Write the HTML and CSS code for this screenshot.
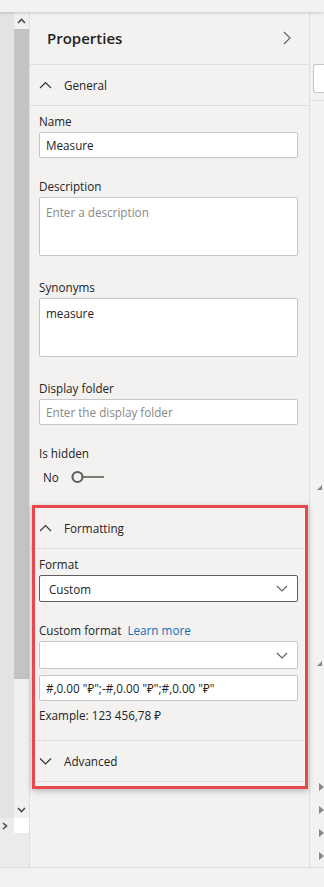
FILE: index.html
```html
<!DOCTYPE html>
<html lang="en">

<head>
    <meta charset="UTF-8">
    <meta name="viewport" content="width=device-width, initial-scale=1.0">
    <title>Properties</title>
    <link rel="stylesheet" href="styles.css">
</head>

<body>
    <div class="topbar"></div>

    <div class="main">
        <!-- left rail + scrollbar -->
        <div class="left">
            <div class="left-top">
                <div class="rail"></div>
                <div class="scrollbar">
                    <div class="sb-btn">
                        <svg width="9" height="6" viewBox="0 0 9 6"><polyline points="1,5 4.5,1.5 8,5" fill="none" stroke="#4a4a4a" stroke-width="1.6"/></svg>
                    </div>
                    <div class="sb-thumb"></div>
                    <div class="sb-track"></div>
                    <div class="sb-btn">
                        <svg width="9" height="6" viewBox="0 0 9 6"><polyline points="1,1 4.5,4.5 8,1" fill="none" stroke="#4a4a4a" stroke-width="1.6"/></svg>
                    </div>
                </div>
            </div>
            <div class="left-corner">
                <div class="corner-arrow">
                    <svg width="6" height="8" viewBox="0 0 6 8"><polyline points="1,1 4.5,4 1,7" fill="none" stroke="#4a4a4a" stroke-width="1.6"/></svg>
                </div>
                <div class="corner-box"></div>
            </div>
            <div class="left-fill"></div>
        </div>

        <!-- properties pane -->
        <div class="panel">
            <div class="panel-header">
                <h1 class="panel-title">Properties</h1>
                <svg class="panel-close" width="8" height="14" viewBox="0 0 8 14"><polyline points="1,1 7,7 1,13" fill="none" stroke="#605e5c" stroke-width="1.1"/></svg>
            </div>

            <div class="section">
                <div class="section-head">
                    <svg class="chev" width="13" height="8" viewBox="0 0 13 8"><polyline points="1,7 6.5,1.5 12,7" fill="none" stroke="#323130" stroke-width="1.1"/></svg>
                    <span>General</span>
                </div>
                <div class="section-body">
                    <div class="field">
                        <div class="label">Name</div>
                        <div class="input">Measure</div>
                    </div>
                    <div class="field field-tall">
                        <div class="label">Description</div>
                        <div class="input textarea placeholder">Enter a description</div>
                    </div>
                    <div class="field field-tall">
                        <div class="label">Synonyms</div>
                        <div class="input textarea">measure</div>
                    </div>
                    <div class="field">
                        <div class="label">Display folder</div>
                        <div class="input placeholder">Enter the display folder</div>
                    </div>
                    <div class="field">
                        <div class="label">Is hidden</div>
                        <div class="toggle-row">
                            <span class="toggle-text">No</span>
                            <svg width="34" height="14" viewBox="0 0 34 14"><circle cx="6.5" cy="7" r="5" fill="none" stroke="#605e5c" stroke-width="2.2"/><line x1="11.5" y1="7" x2="33" y2="7" stroke="#605e5c" stroke-width="1.6"/></svg>
                        </div>
                    </div>
                </div>
            </div>

            <div class="section">
                <div class="section-head">
                    <svg class="chev" width="13" height="8" viewBox="0 0 13 8"><polyline points="1,7 6.5,1.5 12,7" fill="none" stroke="#323130" stroke-width="1.1"/></svg>
                    <span>Formatting</span>
                </div>
                <div class="section-body">
                    <div class="field">
                        <div class="label">Format</div>
                        <div class="input select">
                            <span class="select-value">Custom</span>
                            <svg width="12" height="7" viewBox="0 0 12 7"><polyline points="1,1 6,6 11,1" fill="none" stroke="#605e5c" stroke-width="1.1"/></svg>
                        </div>
                    </div>
                    <div class="field field-close">
                        <div class="label">Custom format <a class="link" href="#">Learn more</a></div>
                        <div class="input combo">
                            <span></span>
                            <svg width="12" height="7" viewBox="0 0 12 7"><polyline points="1,1 6,6 11,1" fill="none" stroke="#605e5c" stroke-width="1.1"/></svg>
                        </div>
                        <div class="input">#,0.00 "₽";-#,0.00 "₽";#,0.00 "₽"</div>
                        <div class="example">Example: 123 456,78 ₽</div>
                    </div>
                </div>
            </div>

            <div class="section">
                <div class="section-head">
                    <svg class="chev" width="13" height="8" viewBox="0 0 13 8"><polyline points="1,1.5 6.5,7 12,1.5" fill="none" stroke="#323130" stroke-width="1.1"/></svg>
                    <span>Advanced</span>
                </div>
            </div>

            <!-- annotation frame -->
            <div class="highlight"></div>
        </div>

        <!-- edge of the next pane -->
        <div class="side">
            <div class="side-box"></div>
            <div class="side-line"></div>
            <div class="grip grip-1"></div>
            <div class="grip grip-2"></div>
            <div class="side-arrows">
                <span class="tri"></span>
                <span class="tri"></span>
                <span class="tri"></span>
                <span class="tri"></span>
            </div>
        </div>
    </div>

    <div class="bottombar"></div>
</body>

</html>
```

FILE: styles.css
```css
* {
    box-sizing: border-box;
}

body {
    margin: 0;
    width: 324px;
    height: 887px;
    overflow: hidden;
    font-family: "Open Sans", "Noto Sans", sans-serif;
    font-size: 11.7px;
    color: #252423;
    background-color: #f3f2f1;
}

.topbar {
    height: 12px;
    background-color: #f3f2f1;
    box-shadow: 0 1px 3px rgba(0, 0, 0, 0.18);
    position: relative;
    z-index: 2;
}

.main {
    display: flex;
    height: 856px;
    border-bottom: 1px solid #dedcda;
}

/* left rail and scrollbar */
.left {
    width: 29px;
    display: flex;
    flex-direction: column;
    background-color: #ebebeb;
}

.left-top {
    display: flex;
    height: 806px;
}

.rail {
    width: 14px;
    background-color: #e3e3e3;
}

.scrollbar {
    width: 15px;
    display: flex;
    flex-direction: column;
}

.sb-btn {
    height: 17px;
    background-color: #f0f0f0;
    display: flex;
    align-items: center;
    justify-content: center;
}

.sb-thumb {
    height: 650px;
    background-color: #c3c3c3;
}

.sb-track {
    flex: 1;
    background-color: #f0f0f0;
}

.left-corner {
    display: flex;
    height: 15px;
}

.corner-arrow {
    width: 14px;
    display: flex;
    align-items: center;
    padding-left: 2px;
}

.corner-box {
    width: 15px;
    background-color: #fff;
}

.left-fill {
    flex: 1;
}

/* properties pane */
.panel {
    position: relative;
    width: 281px;
    border-left: 1px solid #e1dfdd;
    border-right: 1px solid #e1dfdd;
    background-color: #f3f2f1;
}

.panel-header {
    height: 53px;
    display: flex;
    align-items: center;
    justify-content: space-between;
    padding: 0 18px 0 17px;
    border-bottom: 1px solid #e1dfdd;
}

.panel-title {
    margin: 0;
    font-size: 15px;
    font-weight: 600;
    color: #252423;
}

.section-head {
    height: 41px;
    display: flex;
    align-items: center;
    gap: 12px;
    padding-left: 9px;
    border-bottom: 1px solid #e1dfdd;
}

.section-body {
    padding: 7px 11px 0 9px;
    border-bottom: 1px solid #e1dfdd;
}

.field {
    margin-bottom: 20px;
}

.field-tall {
    margin-bottom: 23px;
}

.label {
    height: 16px;
    line-height: 16px;
    margin-bottom: 3px;
    white-space: nowrap;
}

.link {
    color: #106ebe;
    text-decoration: none;
    margin-left: 3px;
}

.input {
    height: 26px;
    padding: 0 6px;
    display: flex;
    align-items: center;
    background-color: #fff;
    border: 1px solid #c8c6c4;
    border-radius: 2px;
    white-space: nowrap;
}

.textarea {
    height: 59px;
    align-items: flex-start;
    padding-top: 6px;
}

.placeholder {
    color: #8a8886;
}

.select {
    height: 27px;
    border-color: #605e5c;
    justify-content: space-between;
    padding: 0 9px 0 9px;
}

.combo {
    height: 28px;
    justify-content: flex-end;
    padding-right: 9px;
    margin-bottom: 6px;
}

.example {
    height: 16px;
    line-height: 16px;
    margin-top: 6px;
    margin-bottom: 17px;
}

.field-close {
    margin-bottom: 0;
}

.toggle-row {
    display: flex;
    align-items: center;
    gap: 12px;
    height: 20px;
    padding-left: 4px;
    margin-top: 6px;
}

.highlight {
    position: absolute;
    left: 2px;
    top: 493px;
    width: 276px;
    height: 284px;
    border: 3px solid #e8484d;
    box-shadow: 0 2px 6px rgba(0, 0, 0, 0.25);
    pointer-events: none;
}

/* edge of the neighbouring pane */
.side {
    flex: 1;
    display: flex;
    flex-direction: column;
    align-items: flex-end;
}

.side-box {
    margin-top: 52px;
    width: 11px;
    height: 29px;
    background-color: #fff;
    border: 1px solid #c8c6c4;
    border-right: none;
    border-radius: 3px 0 0 3px;
}

.side-line {
    margin-top: 7px;
    width: 100%;
    border-top: 1px solid #e1dfdd;
}

.grip {
    width: 0;
    height: 0;
    margin-right: 2px;
    border-left: 5px solid transparent;
    border-bottom: 5px solid #8a8886;
}

.grip-1 {
    margin-top: 384px;
}

.grip-2 {
    margin-top: 171px;
}

.side-arrows {
    margin-top: 117px;
    display: flex;
    flex-direction: column;
    gap: 15px;
    align-self: flex-start;
    padding-left: 9px;
}

.tri {
    width: 0;
    height: 0;
    border-top: 4px solid transparent;
    border-bottom: 4px solid transparent;
    border-left: 5px solid #8a8886;
}
```
